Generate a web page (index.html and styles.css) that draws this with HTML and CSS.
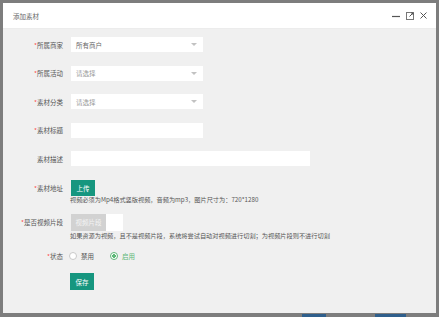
FILE: index.html
```html
<!DOCTYPE html>
<html lang="zh-CN">
  <head>
    <meta charset="UTF-8" />
    <meta name="viewport" content="width=device-width, initial-scale=1.0" />
    <title>添加素材</title>
    <link rel="stylesheet" href="styles.css">
  </head>
  <body>
    <div class="shade">
      <div class="modal">
        <div class="modal-head">
          <span class="modal-title">添加素材</span>
          <div class="modal-tools">
            <svg width="8" height="8" viewBox="0 0 8 8"><path d="M0 4.5h8" stroke="#555" stroke-width="1.2"/></svg>
            <svg width="8" height="8" viewBox="0 0 8 8"><rect x="0.5" y="0.5" width="7" height="7" fill="none" stroke="#777"/><path d="M3.5 4.5L7 1M5 1h2v2" fill="none" stroke="#555"/></svg>
            <svg width="7" height="7" viewBox="0 0 7 7"><path d="M0.5 0.5l6 6M6.5 0.5l-6 6" stroke="#555" stroke-width="1"/></svg>
          </div>
        </div>

        <form class="form" action="#">
          <div class="row">
            <label class="label"><i>*</i>所属商家</label>
            <div class="select"><span class="val">所有商户</span><span class="caret"></span></div>
          </div>
          <div class="row">
            <label class="label"><i>*</i>所属活动</label>
            <div class="select"><span class="ph">请选择</span><span class="caret"></span></div>
          </div>
          <div class="row">
            <label class="label"><i>*</i>素材分类</label>
            <div class="select"><span class="ph">请选择</span><span class="caret"></span></div>
          </div>
          <div class="row">
            <label class="label"><i>*</i>素材标题</label>
            <div class="input"></div>
          </div>
          <div class="row">
            <label class="label">素材描述</label>
            <div class="input wide"></div>
          </div>

          <div class="row tall">
            <label class="label"><i>*</i>素材地址</label>
            <div class="block">
              <button type="button" class="btn">上传</button>
              <p class="hint">视频必须为Mp4格式竖版视频，音频为mp3，图片尺寸为：720*1280</p>
            </div>
          </div>

          <div class="row tall clip">
            <label class="label"><i>*</i>是否视频片段</label>
            <div class="block">
              <div class="switch"><span class="switch-off">视频片段</span><span class="switch-on"></span></div>
              <p class="hint">如果资源为视频，且不是视频片段，系统将尝试自动对视频进行切割；为视频片段则不进行切割</p>
            </div>
          </div>

          <div class="row state">
            <label class="label"><i>*</i>状态</label>
            <div class="radios">
              <span class="radio"><span class="dot"></span>禁用</span>
              <span class="radio on"><span class="dot"></span>启用</span>
            </div>
          </div>

          <div class="row save">
            <span class="label"></span>
            <button type="button" class="btn">保存</button>
          </div>
        </form>
      </div>
      <div class="behind">
        <span class="behind-btn one"></span>
        <span class="behind-btn two"></span>
      </div>
    </div>
  </body>
</html>
```

FILE: styles.css
```css
* {
  padding: 0;
  margin: 0;
  box-sizing: border-box;
}

body {
  width: 439px;
  height: 317px;
  overflow: hidden;
  font-family: "Noto Sans CJK SC", "Noto Sans", sans-serif;
  font-size: 6.5px;
  color: #555;
}

.shade {
  width: 439px;
  height: 317px;
  background-color: #7d7d7d;
  padding: 3px 3px 0 3px;
  display: flex;
  flex-direction: column;
}

.modal {
  width: 433px;
  height: 310px;
  background-color: #f0f0f0;
  display: flex;
  flex-direction: column;
}

.modal-head {
  height: 26px;
  background-color: #fff;
  display: flex;
  align-items: center;
  justify-content: space-between;
  padding: 0 9px 0 10px;
  border-bottom: 1px solid #ececec;
}

.modal-title {
  font-size: 6.5px;
  color: #666;
}

.modal-tools {
  display: flex;
  align-items: center;
  gap: 6px;
}

.form {
  padding-top: 8px;
  display: flex;
  flex-direction: column;
}

.row {
  display: flex;
  align-items: center;
  height: 15px;
  margin-bottom: 13.6px;
}

.label {
  width: 60px;
  text-align: right;
  margin-right: 8px;
  flex-shrink: 0;
  color: #555;
}

.label i {
  font-style: normal;
  color: #ff4a4a;
}

.select,
.input {
  width: 132px;
  height: 15px;
  background-color: #fff;
  display: flex;
  align-items: center;
  justify-content: space-between;
  padding: 0 6px 0 5px;
}

.input.wide {
  width: 239px;
}

.val {
  color: #666;
}

.ph {
  color: #999;
}

.caret {
  width: 0;
  height: 0;
  border-left: 3.5px solid transparent;
  border-right: 3.5px solid transparent;
  border-top: 3.5px solid #c2c2c2;
}

.row.tall {
  height: auto;
  align-items: flex-start;
  margin-bottom: 0;
}

.row.tall .label {
  line-height: 16px;
}

.block {
  display: flex;
  flex-direction: column;
}

.btn {
  width: 24px;
  height: 16px;
  border: none;
  background-color: #16967f;
  color: #fff;
  font-family: inherit;
  font-size: 6.5px;
}

.hint {
  margin-top: -1px;
  line-height: 10px;
  color: #555;
  font-size: 6.2px;
  white-space: nowrap;
  margin-left: -1px;
}

.row.clip {
  margin-top: 9px;
}

.row.clip .label {
  line-height: 17px;
}

.row.clip .hint {
  margin-top: 0.5px;
}

.switch {
  width: 52px;
  height: 17px;
  display: flex;
}

.switch-off {
  width: 35px;
  background-color: #d2d2d2;
  color: #f4f4f4;
  display: flex;
  align-items: center;
  justify-content: center;
}

.switch-on {
  flex: 1;
  background-color: #fff;
}

.row.state {
  margin-top: 7.5px;
  margin-bottom: 9.5px;
}

.row.state .label {
  margin-right: 6px;
}

.radios {
  display: flex;
  gap: 16px;
}

.radio {
  display: flex;
  align-items: center;
  gap: 4px;
  color: #555;
}

.dot {
  width: 8px;
  height: 8px;
  border: 1px solid #c9c9c9;
  border-radius: 50%;
  background-color: #fff;
}

.radio.on {
  color: #5fb878;
}

.radio.on .dot {
  border-color: #5fb878;
  background: radial-gradient(circle, #5fb878 0 1.6px, #fff 2px);
}

.row.save {
  height: 17px;
}

.row.save .label {
  margin-right: 7px;
}

.row.save .btn {
  height: 17px;
}

.behind {
  flex: 1;
  position: relative;
}

.behind-btn {
  position: absolute;
  top: 1px;
  height: 4px;
  background-color: #2f5f8c;
}

.behind-btn.one {
  left: 299px;
  width: 24px;
}

.behind-btn.two {
  left: 372px;
  width: 31px;
}
```
